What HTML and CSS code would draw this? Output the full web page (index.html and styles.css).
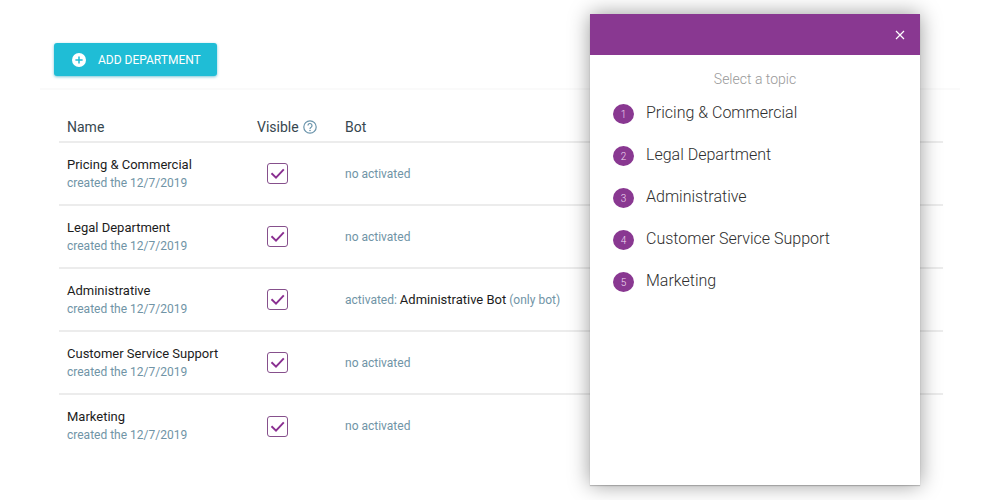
FILE: index.html
```html
<!DOCTYPE html>
<html lang="en">
<head>
<meta charset="utf-8">
<title>Departments</title>
<meta name="viewport" content="width=device-width, initial-scale=1">
<link rel="stylesheet" href="styles.css">
</head>
<body>
<svg class="defs" aria-hidden="true">
  <symbol id="check" viewBox="0 0 21 21"><path d="M4.5 10.2 9 14.6 16.8 6.3" fill="none" stroke="currentColor" stroke-width="1.9"/></symbol>
</svg>
<main class="page">
  <header class="toolbar">
    <button class="add" type="button">
      <svg class="add-icon" viewBox="0 0 14 14" aria-hidden="true"><circle cx="7" cy="7" r="7" fill="#fff"/><path d="M7 3.4v7.2M3.4 7h7.2" stroke="#1fbdd6" stroke-width="1.5"/></svg>
      ADD DEPARTMENT
    </button>
  </header>
  <table class="departments">
    <thead>
      <tr>
        <th class="col-name" scope="col">Name</th>
        <th class="col-visible" scope="col"><span class="visible-head">Visible
          <svg class="help" viewBox="0 0 14 14" aria-hidden="true"><g fill="none" stroke="currentColor" stroke-width="1.2"><circle cx="7" cy="7" r="6.2"/><path d="M5 5.6a2 2 0 1 1 3.1 1.6C7.3 7.7 7 8 7 9"/></g><circle cx="7" cy="10.5" r=".8" fill="currentColor"/></svg></span></th>
        <th scope="col">Bot</th>
      </tr>
    </thead>
    <tbody>
      <tr>
        <td><div class="name">Pricing &amp; Commercial</div><div class="muted">created the 12/7/2019</div></td>
        <td><label class="tick"><input type="checkbox" checked aria-label="Pricing &amp; Commercial visible"><svg><use href="#check"/></svg></label></td>
        <td class="muted bot">no activated</td>
      </tr>
      <tr>
        <td><div class="name">Legal Department</div><div class="muted">created the 12/7/2019</div></td>
        <td><label class="tick"><input type="checkbox" checked aria-label="Legal Department visible"><svg><use href="#check"/></svg></label></td>
        <td class="muted bot">no activated</td>
      </tr>
      <tr>
        <td><div class="name">Administrative</div><div class="muted">created the 12/7/2019</div></td>
        <td><label class="tick"><input type="checkbox" checked aria-label="Administrative visible"><svg><use href="#check"/></svg></label></td>
        <td class="muted bot">activated: <span class="name">Administrative Bot</span> (only bot)</td>
      </tr>
      <tr>
        <td><div class="name">Customer Service Support</div><div class="muted">created the 12/7/2019</div></td>
        <td><label class="tick"><input type="checkbox" checked aria-label="Customer Service Support visible"><svg><use href="#check"/></svg></label></td>
        <td class="muted bot">no activated</td>
      </tr>
      <tr>
        <td><div class="name">Marketing</div><div class="muted">created the 12/7/2019</div></td>
        <td><label class="tick"><input type="checkbox" checked aria-label="Marketing visible"><svg><use href="#check"/></svg></label></td>
        <td class="muted bot">no activated</td>
      </tr>
    </tbody>
  </table>
</main>
<aside class="widget">
  <header class="widget-head">
    <button class="close" type="button" aria-label="Close"><svg viewBox="0 0 10 10"><path d="M1 1l8 8M9 1 1 9" stroke="#fff" stroke-width="1.2"/></svg></button>
  </header>
  <div class="prompt">Select a topic</div>
  <ol class="topics">
    <li><button type="button"><span class="num">1</span><span class="topic">Pricing &amp; Commercial</span></button></li>
    <li><button type="button"><span class="num">2</span><span class="topic">Legal Department</span></button></li>
    <li><button type="button"><span class="num">3</span><span class="topic">Administrative</span></button></li>
    <li><button type="button"><span class="num">4</span><span class="topic">Customer Service Support</span></button></li>
    <li><button type="button"><span class="num">5</span><span class="topic">Marketing</span></button></li>
  </ol>
</aside>
</body>
</html>
```
FILE: styles.css
```css
* { box-sizing: border-box; }

body {
  margin: 0;
  background: #fff;
  color: #1c1c1c;
  font-family: Roboto, "Liberation Sans", sans-serif;
  font-size: 13px;
}

button {
  border: 0;
  padding: 0;
  background: none;
  font: inherit;
  cursor: pointer;
}

.defs { display: none; }

.page { padding: 0 40px; }

.toolbar {
  padding: 43px 14px 12px;
  border-bottom: 2px solid #fafafa;
}

.add {
  display: flex;
  align-items: center;
  gap: 12px;
  height: 33px;
  padding: 0 16px 0 18px;
  border-radius: 3px;
  background: #1fbdd6;
  box-shadow: 0 1px 3px rgba(31, 160, 190, 0.6);
  color: #fff;
  font-size: 12px;
  white-space: nowrap;
}

.add-icon { width: 14px; height: 14px; }

.departments {
  width: calc(100% - 36px);
  margin: 14px 17px 0 19px;
  border-collapse: collapse;
  table-layout: fixed;
}

.departments th {
  height: 38px;
  padding: 8px 8px 0;
  border-bottom: 2px solid #ececec;
  color: #37474f;
  font-size: 14px;
  font-weight: 400;
  line-height: 16px;
  text-align: left;
}

.departments td {
  height: 63px;
  padding: 0 8px;
  border-bottom: 2px solid #ececec;
}

.departments tbody tr:last-child td { border-bottom: 0; }

.departments .col-name { width: 190px; }
.departments .col-visible { width: 88px; }

.visible-head {
  display: flex;
  align-items: center;
  gap: 4px;
}

.help { width: 14px; height: 14px; color: #6a94ab; }

.name { color: #1c1c1c; font-size: 13px; line-height: 18px; }
.muted { color: #7094a6; font-size: 12px; line-height: 18px; }

.tick {
  display: grid;
  width: 21px;
  height: 21px;
  margin-left: 10px;
  color: #8a2f91;
}

.tick input,
.tick svg {
  grid-area: 1 / 1;
  width: 21px;
  height: 21px;
  margin: 0;
}

.tick input {
  appearance: none;
  border: 1px solid #86508c;
  border-radius: 3px;
}

.tick svg { visibility: hidden; pointer-events: none; }
.tick input:checked + svg { visibility: visible; }

.widget {
  position: absolute;
  top: 14px;
  right: 80px;
  bottom: 15px;
  width: 330px;
  background: #fff;
  box-shadow: 0 1px 1px rgba(0, 0, 0, 0.2), 0 0 20px rgba(0, 0, 0, 0.4);
}

.widget-head {
  display: flex;
  align-items: center;
  justify-content: flex-end;
  height: 41px;
  padding-right: 15px;
  background: #893891;
}

.close { display: flex; }
.close svg { width: 10px; height: 10px; }

.prompt {
  padding-top: 16px;
  color: #999;
  font-size: 14px;
  font-weight: 300;
  line-height: 16px;
  text-align: center;
}

.topics {
  margin: 0;
  padding: 6px 23px;
  list-style: none;
}

.topics button {
  display: flex;
  align-items: center;
  gap: 12px;
  height: 42px;
  color: #2e2e2e;
  font-size: 16px;
  font-weight: 300;
}

.topic { padding-bottom: 4px; }

.num {
  display: grid;
  place-items: center;
  width: 21px;
  height: 20px;
  border-radius: 50%;
  background: #893891;
  color: #f0dcf2;
  font-size: 10px;
}
```
